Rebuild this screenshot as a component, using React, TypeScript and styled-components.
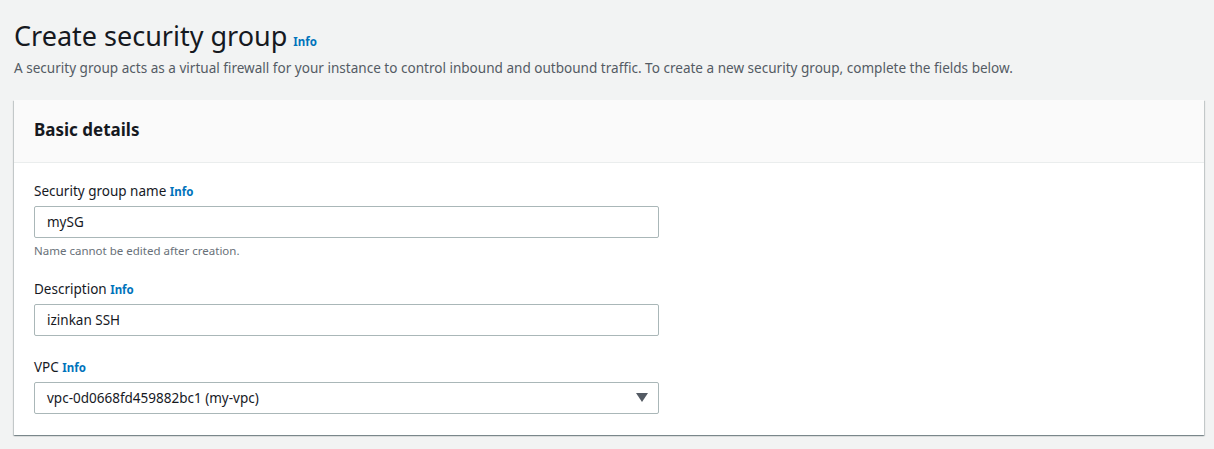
import React from 'react';
import styled, { createGlobalStyle } from 'styled-components';

const GlobalStyle = createGlobalStyle`
  html, body {
    margin: 0;
    padding: 0;
    background: #f2f3f3;
    font-family: 'Noto Sans', 'Open Sans', sans-serif;
    color: #16191f;
  }
`;

interface FieldProps {
  label: string;
  hint?: string;
}

const Field: React.FC<React.PropsWithChildren<FieldProps>> = ({
  label,
  hint,
  children,
}) => (
  <FieldBlock>
    <FieldLabel>
      {label} <InfoLink>Info</InfoLink>
    </FieldLabel>
    {children}
    {hint ? <Hint>{hint}</Hint> : null}
  </FieldBlock>
);

const App: React.FC = () => {
  return (
    <>
      <GlobalStyle />
      <Page>
        <TitleRow>
          <Title>Create security group</Title>
          <InfoLink>Info</InfoLink>
        </TitleRow>
        <Subtitle>
          A security group acts as a virtual firewall for your instance to
          control inbound and outbound traffic. To create a new security group,
          complete the fields below.
        </Subtitle>
        <Card>
          <CardHeader>
            <CardTitle>Basic details</CardTitle>
          </CardHeader>
          <CardBody>
            <Field
              label="Security group name"
              hint="Name cannot be edited after creation."
            >
              <TextInput defaultValue="mySG" />
            </Field>
            <Field label="Description">
              <TextInput defaultValue="izinkan SSH" />
            </Field>
            <Field label="VPC">
              <Select>
                <span>vpc-0d0668fd459882bc1 (my-vpc)</span>
                <svg width="12" height="10" viewBox="0 0 12 10">
                  <path d="M0 0 L12 0 L6 9 Z" fill="#545b64" />
                </svg>
              </Select>
            </Field>
          </CardBody>
        </Card>
      </Page>
    </>
  );
};

const Page = styled.div`
  padding: 18px 10px 14px 14px;
`;

const TitleRow = styled.div`
  display: flex;
  align-items: baseline;
  gap: 6px;
`;

const Title = styled.h1`
  margin: 0;
  font-size: 27px;
  font-weight: 400;
  line-height: 36px;
  color: #16191f;
`;

const InfoLink = styled.span`
  font-size: 11.5px;
  font-weight: 700;
  color: #0073bb;
`;

const Subtitle = styled.p`
  margin: 4px 0 0;
  font-size: 13.55px;
  line-height: 20px;
  color: #545b64;
`;

const Card = styled.section`
  margin-top: 22px;
  background: #ffffff;
  box-shadow: 0 1px 1px 0 rgba(0, 28, 36, 0.3),
    1px 1px 1px 0 rgba(0, 28, 36, 0.15), -1px 1px 1px 0 rgba(0, 28, 36, 0.15);
`;

const CardHeader = styled.div`
  height: 63px;
  box-sizing: border-box;
  display: flex;
  align-items: center;
  padding: 0 20px 2px;
  background: #fafafa;
  border-bottom: 1px solid #eaeded;
`;

const CardTitle = styled.h2`
  margin: 0;
  font-size: 17px;
  font-weight: 700;
  line-height: 22px;
`;

const CardBody = styled.div`
  display: flex;
  flex-direction: column;
  gap: 21px;
  padding: 18px 20px 21px;
`;

const FieldBlock = styled.div`
  display: flex;
  flex-direction: column;
`;

const FieldLabel = styled.label`
  font-size: 13.5px;
  line-height: 20px;
  margin-bottom: 4px;
  color: #16191f;
`;

const TextInput = styled.input`
  box-sizing: border-box;
  width: 625px;
  height: 32px;
  padding: 0 12px;
  border: 1px solid #aab7b8;
  border-radius: 2px;
  font-family: inherit;
  font-size: 13.5px;
  color: #16191f;
  background: #fff;
  outline: none;
`;

const Select = styled.div`
  box-sizing: border-box;
  width: 625px;
  height: 32px;
  padding: 0 10px 0 12px;
  display: flex;
  align-items: center;
  justify-content: space-between;
  border: 1px solid #aab7b8;
  border-radius: 2px;
  font-size: 13.5px;
  color: #16191f;
`;

const Hint = styled.div`
  margin-top: 6px;
  font-size: 11.5px;
  line-height: 14px;
  color: #687078;
`;

export default App;
